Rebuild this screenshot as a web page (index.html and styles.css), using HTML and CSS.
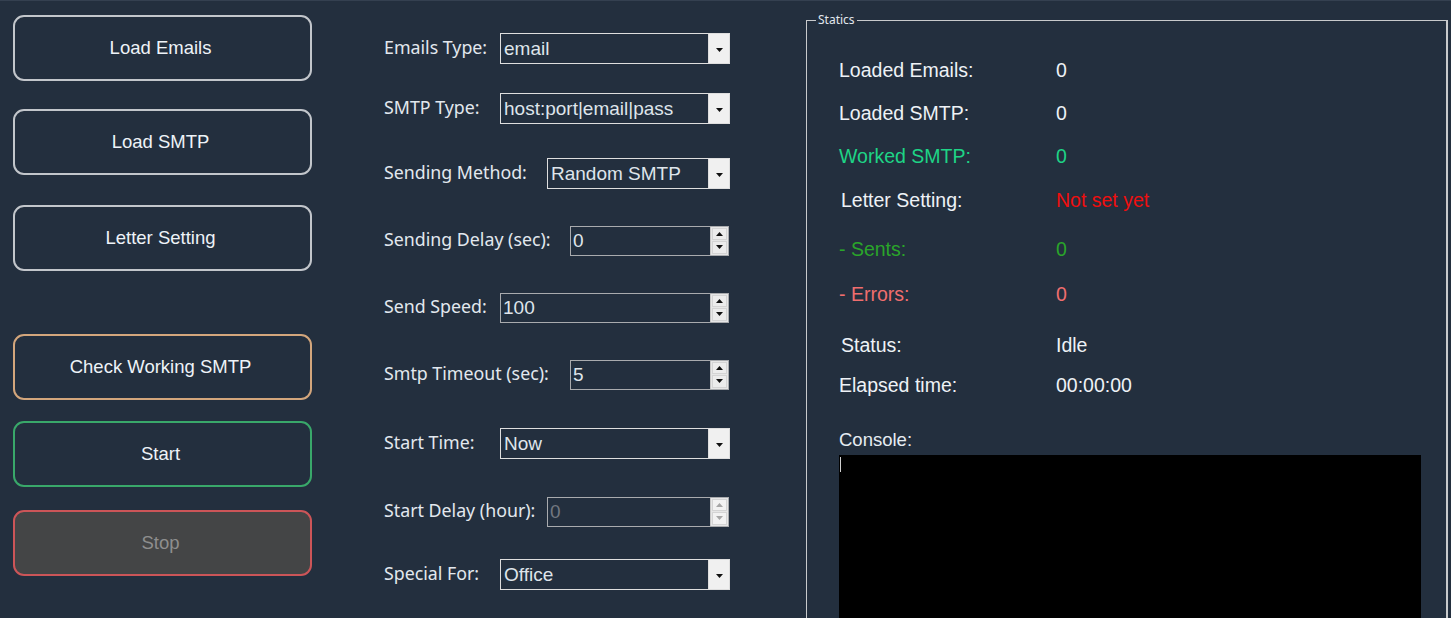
FILE: index.html
```html
<!DOCTYPE html>
<html>
<head>
<meta charset="utf-8">
<link rel="stylesheet" href="styles.css">
</head>
<body>
<div class="app">
  <div class="buttons">
    <div class="btn gray">Load Emails</div>
    <div class="btn gray">Load SMTP</div>
    <div class="btn gray">Letter Setting</div>
    <div class="btn tan">Check Working SMTP</div>
    <div class="btn green">Start</div>
    <div class="btn red stop">Stop</div>
  </div>

  <div class="form">
    <div class="row"><span class="lbl ls">Emails Type:</span>
      <div class="combo"><span class="val">email</span><span class="drop"><svg width="7" height="4" viewBox="0 0 7 4"><path d="M0 0H7L3.5 4Z"/></svg></span></div></div>
    <div class="row"><span class="lbl ls">SMTP Type:</span>
      <div class="combo"><span class="val">host:port|email|pass</span><span class="drop"><svg width="7" height="4" viewBox="0 0 7 4"><path d="M0 0H7L3.5 4Z"/></svg></span></div></div>
    <div class="row"><span class="lbl lm">Sending Method:</span>
      <div class="combo"><span class="val">Random SMTP</span><span class="drop"><svg width="7" height="4" viewBox="0 0 7 4"><path d="M0 0H7L3.5 4Z"/></svg></span></div></div>
    <div class="row"><span class="lbl ll">Sending Delay (sec):</span>
      <div class="num"><span class="val">0</span><span class="spin"><span class="sb"><svg width="7" height="4" viewBox="0 0 7 4"><path d="M0 4H7L3.5 0Z"/></svg></span><span class="sb"><svg width="7" height="4" viewBox="0 0 7 4"><path d="M0 0H7L3.5 4Z"/></svg></span></span></div></div>
    <div class="row"><span class="lbl ls">Send Speed:</span>
      <div class="num"><span class="val">100</span><span class="spin"><span class="sb"><svg width="7" height="4" viewBox="0 0 7 4"><path d="M0 4H7L3.5 0Z"/></svg></span><span class="sb"><svg width="7" height="4" viewBox="0 0 7 4"><path d="M0 0H7L3.5 4Z"/></svg></span></span></div></div>
    <div class="row"><span class="lbl ll">Smtp Timeout (sec):</span>
      <div class="num"><span class="val">5</span><span class="spin"><span class="sb"><svg width="7" height="4" viewBox="0 0 7 4"><path d="M0 4H7L3.5 0Z"/></svg></span><span class="sb"><svg width="7" height="4" viewBox="0 0 7 4"><path d="M0 0H7L3.5 4Z"/></svg></span></span></div></div>
    <div class="row"><span class="lbl ls">Start Time:</span>
      <div class="combo"><span class="val">Now</span><span class="drop"><svg width="7" height="4" viewBox="0 0 7 4"><path d="M0 0H7L3.5 4Z"/></svg></span></div></div>
    <div class="row"><span class="lbl lm">Start Delay (hour):</span>
      <div class="num disabled"><span class="val">0</span><span class="spin"><span class="sb"><svg width="7" height="4" viewBox="0 0 7 4"><path d="M0 4H7L3.5 0Z"/></svg></span><span class="sb"><svg width="7" height="4" viewBox="0 0 7 4"><path d="M0 0H7L3.5 4Z"/></svg></span></span></div></div>
    <div class="row"><span class="lbl ls">Special For:</span>
      <div class="combo"><span class="val">Office</span><span class="drop"><svg width="7" height="4" viewBox="0 0 7 4"><path d="M0 0H7L3.5 4Z"/></svg></span></div></div>
  </div>

  <div class="group">
    <span class="legend">Statics</span>
    <div class="stats">
      <div class="srow"><span class="sl">Loaded Emails:</span><span class="sv">0</span></div>
      <div class="srow"><span class="sl">Loaded SMTP:</span><span class="sv">0</span></div>
      <div class="srow mint"><span class="sl">Worked SMTP:</span><span class="sv">0</span></div>
      <div class="srow"><span class="sl ind">Letter Setting:</span><span class="sv redv">Not set yet</span></div>
      <div class="srow dgreen"><span class="sl">- Sents:</span><span class="sv">0</span></div>
      <div class="srow pink"><span class="sl">- Errors:</span><span class="sv">0</span></div>
      <div class="srow"><span class="sl ind">Status:</span><span class="sv">Idle</span></div>
      <div class="srow"><span class="sl">Elapsed time:</span><span class="sv">00:00:00</span></div>
      <div class="clabel">Console:</div>
      <div class="console"><span class="caret"></span></div>
    </div>
  </div>
</div>
</body>
</html>
```
FILE: styles.css
```css
html, body {
  margin: 0;
  padding: 0;
  background: #232f3e;
  overflow: hidden;
}
.app {
  display: flex;
  align-items: flex-start;
  height: 617px;
  border-top: 1px solid #344050;
  padding-left: 13px;
  font-family: "Liberation Sans", Arial, sans-serif;
  color: #e6ecf2;
}
.buttons {
  width: 299px;
  flex: none;
  display: grid;
  grid-template-rows: 94px 96px 129px 87px 89px 66px;
  padding-top: 14px;
}
.btn {
  height: 66px;
  box-sizing: border-box;
  border: 2px solid #c2c6cb;
  border-radius: 11px;
  display: flex;
  align-items: center;
  justify-content: center;
  padding-right: 4px;
  font-size: 18.5px;
  color: #eef3f8;
}
.btn.tan { border-color: #d3a67c; }
.btn.green { border-color: #39a86a; }
.btn.red { border-color: #cc5558; }
.btn.stop { background: #444546; color: #8e8e8e; }

.form {
  width: 346px;
  flex: none;
  margin-left: 72px;
  display: grid;
  grid-template-rows: 60px 65px 67px 67px 67px 69px 68px 63px 31px;
  padding-top: 32px;
}
.row {
  display: flex;
  align-items: center;
  height: 31px;
}
.lbl {
  flex: none;
  font-family: "Noto Sans", "Open Sans", sans-serif;
  font-size: 17.8px;
  color: #e2e8ee;
  margin-top: -3px;
  white-space: nowrap;
}
.ls { width: 116px; }
.lm { width: 163px; }
.ll { width: 186px; }

.combo, .num {
  flex: 1;
  display: flex;
  box-sizing: border-box;
  height: 31px;
  border: 1px solid #dedede;
}
.num {
  height: 30px;
  border-color: #a9abae;
  margin-right: 1px;
}
.val {
  flex: 1;
  padding-left: 3px;
  line-height: 29px;
  font-size: 19px;
  color: #dfe5eb;
  white-space: nowrap;
  overflow: hidden;
}
.num .val { line-height: 28px; padding-left: 2px; }
.drop {
  width: 21px;
  flex: none;
  background: #f0f0f0;
  border-left: 1px solid #dedede;
  display: flex;
  align-items: center;
  justify-content: center;
  padding-top: 2px;
  box-sizing: border-box;
}
.drop svg, .sb svg { fill: #111; display: block; }
.spin {
  width: 18px;
  flex: none;
  background: #e6e6e6;
  display: flex;
  flex-direction: column;
  padding: 1px;
  gap: 1px;
  box-sizing: border-box;
  border-left: 1px solid #c6c6c6;
}
.sb {
  flex: 1;
  background: #ececec;
  display: flex;
  align-items: center;
  justify-content: center;
  border: 1px solid #d4d4d4;
}
.num.disabled .val { color: #727780; }
.num.disabled .sb svg { fill: #a6a6a6; }
.num.disabled .sb { background: #f2f2f2; }

.group {
  position: relative;
  flex: none;
  width: 642px;
  height: 640px;
  margin-left: 76px;
  margin-top: 19px;
  box-sizing: border-box;
  border: 1px solid #c8cacc;
  border-right-width: 2px;
}
.legend {
  position: absolute;
  top: -9px;
  left: 9px;
  padding: 0 2px;
  background: #232f3e;
  font-family: "Noto Sans", sans-serif;
  font-size: 12px;
  line-height: 16px;
  color: #e2e8ee;
}
.stats {
  display: grid;
  grid-template-rows: 43px 43px 44px 49px 45px 51px 40px 60px 25px 1fr;
  padding-top: 34px;
  padding-left: 32px;
  height: 100%;
  box-sizing: border-box;
}
.srow {
  display: flex;
  height: 30px;
  align-items: center;
  font-size: 19.5px;
  color: #eef2f6;
}
.sl { width: 217px; flex: none; }
.sl.ind { padding-left: 2px; width: 215px; }
.mint { color: #1ed486; }
.dgreen { color: #2aa52a; }
.pink { color: #f06e6e; }
.redv { color: #f00e0e; }
.clabel {
  font-size: 18.5px;
  line-height: 20px;
  color: #e6ecf2;
}
.console {
  width: 582px;
  background: #000;
  padding: 2px 1px;
  box-sizing: border-box;
}
.caret {
  display: block;
  width: 1px;
  height: 15px;
  background: #d0d0d0;
}
```
